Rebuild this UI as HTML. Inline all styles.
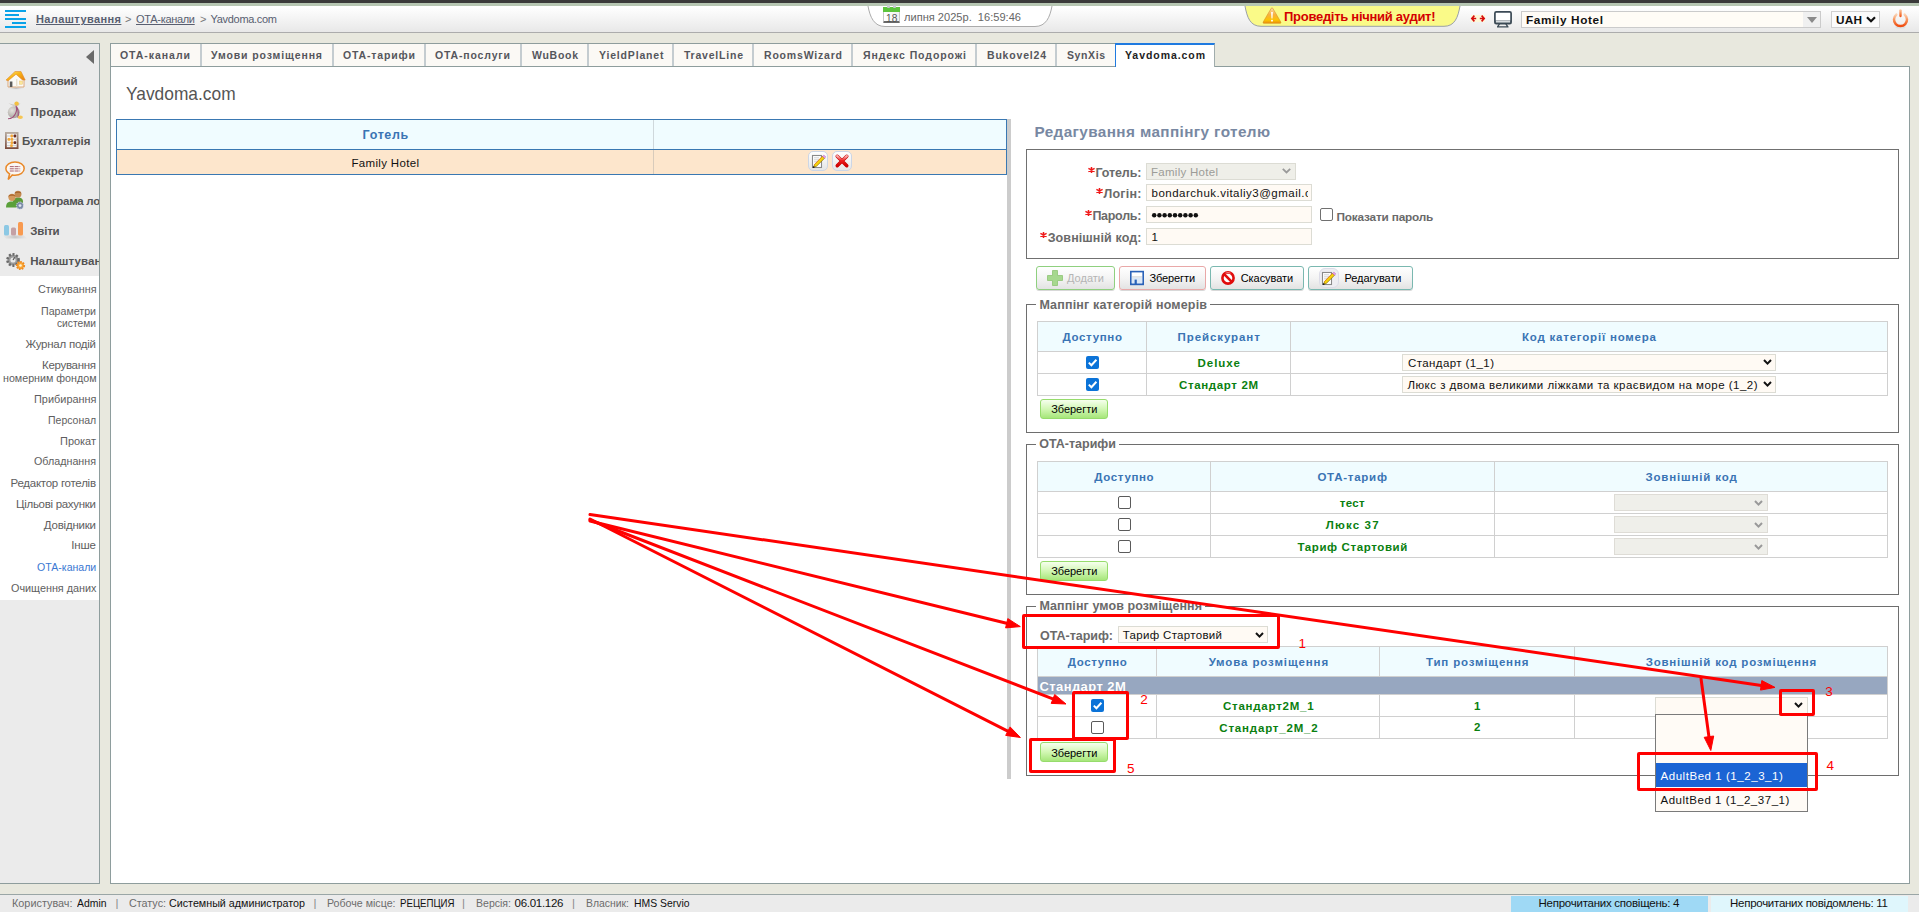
<!DOCTYPE html>
<html><head><meta charset="utf-8"><title>Yavdoma.com</title>
<style>
html,body{margin:0;padding:0;}
body{width:1919px;height:912px;overflow:hidden;position:relative;background:#e8e8de;font-family:"Liberation Sans",sans-serif;}
.t{position:absolute;white-space:nowrap;line-height:1;}
.b{position:absolute;box-sizing:border-box;}
svg{position:absolute;overflow:visible;}
</style></head><body>

<div class="b" style="left:0px;top:0px;width:1919px;height:3px;background:#3a3a3a;"></div>
<div class="b" style="left:0px;top:3px;width:1919px;height:3px;background:#b6c6b2;"></div>
<div class="b" style="left:0px;top:6px;width:1919px;height:27px;background:linear-gradient(#ffffff,#fdfdfd 10%,#e8e8e8);border-bottom:1px solid #acacac;"></div>
<div class="b" style="left:5px;top:10px;width:21px;height:2px;background:#0aa3e8;"></div>
<div class="b" style="left:5px;top:14px;width:14px;height:2px;background:#0aa3e8;"></div>
<div class="b" style="left:5px;top:18px;width:21px;height:2px;background:#0aa3e8;"></div>
<div class="b" style="left:12px;top:22px;width:14px;height:2px;background:#0aa3e8;"></div>
<div class="b" style="left:5px;top:26px;width:21px;height:2px;background:#0aa3e8;"></div>
<div class="t" style="left:36.00px;top:14.49px;font-size:11px;font-weight:bold;letter-spacing:0.404px;color:#585e70;text-decoration:underline;">Налаштування</div>
<div class="t" style="left:125.00px;top:14.49px;font-size:11px;color:#777;">&gt;</div>
<div class="t" style="left:136.00px;top:14.49px;font-size:11px;letter-spacing:-0.315px;color:#585e70;text-decoration:underline;">ОТА-канали</div>
<div class="t" style="left:200.00px;top:14.49px;font-size:11px;color:#777;">&gt;</div>
<div class="t" style="left:210.50px;top:14.49px;font-size:11px;letter-spacing:-0.299px;color:#585e70;">Yavdoma.com</div>
<svg style="left:0;top:0" width="1919" height="40"><path d="M868,6 C870,17 874,26.5 885,26.5 L1035,26.5 C1046,26.5 1050,17 1052,6 Z" fill="#ffffff" stroke="none"/><path d="M868,6 C870,17 874,26.5 885,26.5 L1035,26.5 C1046,26.5 1050,17 1052,6" fill="none" stroke="#ababab" stroke-width="1"/></svg>
<div class="b" style="left:883px;top:7px;width:17px;height:16px;background:linear-gradient(90deg,#fff,#f2f2f2);border:1px solid #c8c8c8;border-bottom:2px solid #6a6a6a;border-radius:1px;"></div>
<div class="b" style="left:883px;top:7px;width:17px;height:5px;background:#5cc43c;"></div>
<div class="b" style="left:887px;top:5px;width:3px;height:3px;background:#c8c8d0;border-radius:1px;"></div>
<div class="b" style="left:893px;top:5px;width:3px;height:3px;background:#c8c8d0;border-radius:1px;"></div>
<div class="t" style="left:885.95px;top:12.81px;font-size:10.5px;transform:scaleX(0.9675);transform-origin:0 0;color:#555;">18</div>
<div class="t" style="left:904.00px;top:11.81px;font-size:11.8px;transform:scaleX(0.9388);transform-origin:0 0;color:#666;">липня 2025р.&nbsp;&nbsp;16:59:46</div>
<svg style="left:0;top:0" width="1919" height="40"><path d="M1245,6 C1247,17 1250,26.3 1261,26.3 L1444,26.3 C1455,26.3 1458,17 1460,6 Z" fill="#fafa88" stroke="none"/><path d="M1245,6 C1247,17 1250,26.3 1261,26.3 L1444,26.3 C1455,26.3 1458,17 1460,6" fill="none" stroke="#9aa0a8" stroke-width="1"/></svg>
<svg style="left:1262px;top:7px" width="20" height="17" viewBox="0 0 20 17"><defs><linearGradient id="wg" x1="0" y1="0" x2="0" y2="1"><stop offset="0" stop-color="#fbe0b8"/><stop offset="0.45" stop-color="#f8b040"/><stop offset="0.8" stop-color="#fbc400"/><stop offset="1" stop-color="#e88a10"/></linearGradient></defs><path d="M9.3,1.2 Q10,0 10.7,1.2 L18.8,15 Q19.4,16.3 18,16.3 L2,16.3 Q0.6,16.3 1.2,15 Z" fill="url(#wg)" stroke="#d99020" stroke-width="0.6"/><path d="M9.1,5 L10.9,5 L10.5,11.6 L9.5,11.6 Z" fill="#fff"/><rect x="9.1" y="12.7" width="1.8" height="1.8" rx="0.5" fill="#fff"/></svg>
<div class="t" style="left:1284.00px;top:10.00px;font-size:13px;font-weight:bold;letter-spacing:-0.279px;color:#d40000;">Проведіть нічний аудит!</div>
<div class="b" style="left:1471px;top:15px;width:14px;height:7px;background:#fdf8d8;"></div>
<svg style="left:1471px;top:15px" width="14" height="7" viewBox="0 0 14 7"><path d="M3.4,0.6 L0.8,3.5 L3.4,6.4 M0.8,3.5 H5.2 M10.6,0.6 L13.2,3.5 L10.6,6.4 M13.2,3.5 H8.8" fill="none" stroke="#d80c0c" stroke-width="1.6"/></svg>
<svg style="left:1494px;top:11px" width="18" height="17" viewBox="0 0 18 17"><rect x="0.9" y="0.9" width="16.2" height="11.8" rx="1.4" fill="#fff" stroke="#3b4a55" stroke-width="1.7"/><rect x="0.9" y="9.6" width="16.2" height="3.2" fill="#3b4a55"/><rect x="1.9" y="10.1" width="14.2" height="1.4" fill="#e8ecee"/><path d="M5.6,12.6 L3.6,15.8 M11.8,12.6 L13.8,15.8 M3,15.8 H14.5" stroke="#3b4a55" stroke-width="1.3" fill="none"/></svg>
<div class="b" style="left:1521px;top:11px;width:300px;height:17px;background:#fffcf6;border:1px solid #cbcbcb;"></div>
<div class="b" style="left:1803px;top:12px;width:17px;height:15px;background:#f0f0f0;"></div>
<svg style="left:1807px;top:17px" width="10" height="6" viewBox="0 0 10 6"><path d="M0,0 L10,0 L5,6 Z" fill="#8a8a8a"/></svg>
<div class="t" style="left:1526.00px;top:14.81px;font-size:11.8px;font-weight:bold;letter-spacing:0.622px;color:#111;">Family Hotel</div>
<div class="b" style="left:1831px;top:11px;width:49px;height:17px;background:#fbfbfb;border:1px solid #d0d0d0;"></div>
<div class="t" style="left:1836.00px;top:14.81px;font-size:11.8px;font-weight:bold;letter-spacing:0.217px;color:#111;">UAH</div>
<svg style="left:1866px;top:16px" width="10" height="7" viewBox="0 0 10 7"><path d="M1,1.2 L5,5.2 L9,1.2" fill="none" stroke="#111" stroke-width="2.2"/></svg>
<svg style="left:1892px;top:8px" width="17" height="21" viewBox="0 0 17 21"><defs><linearGradient id="pw" x1="0" y1="0" x2="0" y2="1"><stop offset="0" stop-color="#fbd0b0"/><stop offset="0.45" stop-color="#f7945a"/><stop offset="1" stop-color="#f04c10"/></linearGradient></defs><ellipse cx="8.5" cy="19" rx="5" ry="1.5" fill="#d8dcdc" opacity="0.8"/><path d="M4.3,6.6 A6.5,6.5 0 1 0 12.7,6.6" fill="none" stroke="url(#pw)" stroke-width="2.5" stroke-linecap="round"/><rect x="7.3" y="1.2" width="2.4" height="8" rx="1.1" fill="url(#pw)"/></svg>
<div class="b" style="left:-1px;top:43px;width:101px;height:841px;background:#ebebeb;border:1px solid #8e9d9d;"></div>
<div class="b" style="left:0px;top:276px;width:99px;height:324px;background:#ffffff;"></div>
<svg style="left:86px;top:50px" width="8" height="14" viewBox="0 0 8 14"><path d="M8,0 L8,14 L0,7 Z" fill="#6a6a6a"/></svg>
<div class="t" style="left:30.50px;top:76.27px;font-size:11.5px;font-weight:bold;letter-spacing:-0.244px;color:#535353;">Базовий</div>
<div class="t" style="left:30.50px;top:106.77px;font-size:11.5px;font-weight:bold;letter-spacing:0.297px;color:#535353;">Продаж</div>
<div class="t" style="left:22.00px;top:136.27px;font-size:11.5px;font-weight:bold;color:#535353;">Бухгалтерія</div>
<div class="t" style="left:30.20px;top:166.27px;font-size:11.5px;font-weight:bold;letter-spacing:0.032px;color:#535353;">Секретар</div>
<div style="position:absolute;left:0;top:190px;width:99px;height:30px;overflow:hidden;">
<div class="t" style="left:30.20px;top:6.27px;font-size:11.5px;font-weight:bold;letter-spacing:-0.257px;color:#535353;">Програма лояльності</div>
</div>
<div class="t" style="left:30.20px;top:225.77px;font-size:11.5px;font-weight:bold;letter-spacing:-0.168px;color:#535353;">Звіти</div>
<div style="position:absolute;left:0;top:250px;width:99px;height:25px;overflow:hidden;">
<div class="t" style="left:30.20px;top:5.97px;font-size:11.5px;font-weight:bold;letter-spacing:0.071px;color:#535353;">Налаштування</div>
</div>
<svg style="left:5px;top:70px" width="21" height="20" viewBox="0 0 21 20"><defs><linearGradient id="roof" x1="0" y1="0" x2="1" y2="1"><stop offset="0" stop-color="#fff07a"/><stop offset="0.45" stop-color="#f7b416"/><stop offset="1" stop-color="#e87a10"/></linearGradient><radialGradient id="shd" cx="0.5" cy="0.5" r="0.5"><stop offset="0" stop-color="#bbb"/><stop offset="1" stop-color="#ebebeb" stop-opacity="0"/></radialGradient></defs><ellipse cx="11" cy="18.3" rx="9" ry="1.8" fill="url(#shd)"/><path d="M3,9 L3,17 L19,17 L19,9 L11,3 Z" fill="#fbfaf6" stroke="#d9a070" stroke-width="0.9"/><path d="M1,10 L10,1.5 L16,1.5 L20.2,10 L17.5,10 L11,4.2 L3.2,10.8 Z" fill="url(#roof)" stroke="#e08a30" stroke-width="0.6"/><rect x="4.8" y="11.5" width="2.6" height="5.5" fill="#5a5a5a"/><rect x="14.5" y="11" width="3" height="3.2" fill="#fbe89a" stroke="#e8c070" stroke-width="0.5"/><rect x="11" y="9" width="1.4" height="8" fill="#e8e0d0"/></svg>
<svg style="left:7px;top:101px" width="17" height="20" viewBox="0 0 17 20"><defs><radialGradient id="bag" cx="0.35" cy="0.35" r="0.7"><stop offset="0" stop-color="#e4e2de"/><stop offset="1" stop-color="#a4a09a"/></radialGradient></defs><path d="M1.5,2.2 L6,4.8 L11,4.8 L13.5,2.2 L10,3.5 L6,3.5 Z" fill="#c8c4bc"/><circle cx="6.8" cy="11.3" r="6" fill="url(#bag)"/><circle cx="9.6" cy="2.6" r="2.2" fill="#f4c040"/><path d="M8.8,4.8 C10.5,8 9.5,11 8,13.5 C7,15.5 5.5,17 3,17.5 M9.5,5.5 C12,9 11.5,13 11,17" stroke="#a0507a" stroke-width="1.1" fill="none"/><ellipse cx="13.3" cy="16.2" rx="2.6" ry="1.8" fill="#f6c654"/><path d="M1,17.8 L4,17.3" stroke="#a0507a" stroke-width="1"/></svg>
<svg style="left:5px;top:132px" width="14" height="18" viewBox="0 0 14 18"><defs><linearGradient id="abf" x1="0" y1="0" x2="0" y2="1"><stop offset="0" stop-color="#b8aca0"/><stop offset="1" stop-color="#7a4a3a"/></linearGradient></defs><rect x="0" y="0" width="13.5" height="17" fill="url(#abf)"/><rect x="1.8" y="1.8" width="9.9" height="13.4" fill="#f8f6f2"/><path d="M1.8,4 H11.7 M1.8,7.3 H11.7 M1.8,10.6 H11.7 M1.8,13.6 H11.7" stroke="#aab0c0" stroke-width="0.6"/><rect x="5.5" y="2.6" width="2.5" height="2.8" rx="0.8" fill="#f4a838"/><rect x="8.6" y="2.6" width="2.6" height="2.8" rx="0.8" fill="#6a2a20"/><rect x="2.6" y="6" width="2.6" height="2.8" rx="0.8" fill="#f4a838"/><rect x="5.6" y="6" width="2.6" height="2.8" rx="0.8" fill="#f4a838"/><rect x="5.6" y="9.2" width="2.6" height="2.8" rx="0.8" fill="#f4a838"/><rect x="8.6" y="9.2" width="2.6" height="2.8" rx="0.8" fill="#6a2a20"/><rect x="5.2" y="12.3" width="2.6" height="2.8" rx="0.8" fill="#f4a838"/></svg>
<svg style="left:5px;top:161px" width="20" height="20" viewBox="0 0 20 20"><path d="M10,1 C15.2,1 19.2,3.9 19.2,7.6 C19.2,11.3 15.2,14.2 10,14.2 C9,14.2 8.2,14.1 7.3,13.9 L3.2,18.4 L4.6,12.8 C2.3,11.6 0.9,9.7 0.9,7.6 C0.9,3.9 4.9,1 10,1 Z" fill="#fbf7f2" stroke="#e8892a" stroke-width="1.5"/><path d="M4.8,5.6 H15.2 M4.8,7.8 H15.2 M4.8,10 H15.2" stroke="#a86070" stroke-width="1" stroke-dasharray="4 0.8"/></svg>
<svg style="left:5px;top:190px" width="20" height="20" viewBox="0 0 20 20"><path d="M8,12 C8,8.5 10,7.5 13,7.5 C16,7.5 18,8.5 18,12 L18,14 L8,14 Z" fill="#5c9a3a"/><circle cx="13" cy="4.2" r="3.4" fill="#c48a50"/><path d="M9.6,3.6 C9.8,0.8 16.2,0.8 16.4,3.6 C15,2.4 11,2.4 9.6,3.6 Z" fill="#a0602a"/><path d="M1,17.5 C1,13 3,11.5 7,11.5 C11,11.5 13,13 13,17.5 Z" fill="#5aa03a"/><circle cx="7" cy="7.3" r="3.6" fill="#d49a5e"/><path d="M3.3,7 C3.3,3.2 10.7,3.2 10.7,7 C9.5,5.3 4.5,5.3 3.3,7 Z" fill="#a8642c"/><circle cx="15" cy="15.6" r="3.6" fill="#7c8ca8" stroke="#eef" stroke-width="0.8" stroke-dasharray="1.2 0.9"/><circle cx="15" cy="15.6" r="1.4" fill="#dfe6f0"/></svg>
<svg style="left:2px;top:221px" width="26" height="19" viewBox="0 0 26 19"><defs><linearGradient id="sh" x1="0" y1="0" x2="1" y2="0"><stop offset="0" stop-color="#ebebeb"/><stop offset="0.5" stop-color="#c8c8c8"/><stop offset="1" stop-color="#ebebeb"/></linearGradient></defs><path d="M0.5,14.5 L22,14.5 L25.5,17.5 L4,17.5 Z" fill="url(#sh)"/><rect x="2" y="4" width="5" height="10.5" rx="1.5" fill="#8cc8e4"/><rect x="9" y="6.5" width="5" height="8" rx="1.5" fill="#c4a0a4"/><rect x="16" y="1" width="5" height="13.5" rx="1.5" fill="#f89a50"/></svg>
<svg style="left:5px;top:252px" width="21" height="19" viewBox="0 0 21 19"><circle cx="8" cy="8" r="5.6" fill="#9a9a9a" stroke="#6a6a6a" stroke-width="2.6" stroke-dasharray="2 1.6"/><circle cx="8" cy="8" r="2.6" fill="#e8e8e8"/><path d="M8,8 L9.8,5.2" stroke="#555" stroke-width="1.2"/><circle cx="15.5" cy="13.5" r="3.6" fill="#f8a838" stroke="#f08a20" stroke-width="2" stroke-dasharray="1.6 1.1"/><circle cx="15.5" cy="13.5" r="1.3" fill="#fff4d8"/></svg>
<div class="t" style="left:37.50px;top:284.27px;font-size:11.5px;transform:scaleX(0.9403);transform-origin:0 0;color:#5e5e60;">Стикування</div>
<div class="t" style="left:41.00px;top:305.67px;font-size:11.5px;transform:scaleX(0.9250);transform-origin:0 0;color:#5e5e60;">Параметри</div>
<div class="t" style="left:57.00px;top:317.97px;font-size:11.5px;transform:scaleX(0.8907);transform-origin:0 0;color:#5e5e60;">системи</div>
<div class="t" style="left:25.50px;top:339.27px;font-size:11.5px;letter-spacing:-0.247px;color:#5e5e60;">Журнал подій</div>
<div class="t" style="left:42.00px;top:359.97px;font-size:11.5px;letter-spacing:-0.302px;color:#5e5e60;">Керування</div>
<div class="t" style="left:2.50px;top:373.07px;font-size:11.5px;transform:scaleX(0.9300);transform-origin:0 0;color:#5e5e60;">номерним фондом</div>
<div class="t" style="left:33.50px;top:394.27px;font-size:11.5px;transform:scaleX(0.9496);transform-origin:0 0;color:#5e5e60;">Прибирання</div>
<div class="t" style="left:47.80px;top:414.87px;font-size:11.5px;transform:scaleX(0.9130);transform-origin:0 0;color:#5e5e60;">Персонал</div>
<div class="t" style="left:60.00px;top:435.87px;font-size:11.5px;transform:scaleX(0.9536);transform-origin:0 0;color:#5e5e60;">Прокат</div>
<div class="t" style="left:34.00px;top:456.47px;font-size:11.5px;transform:scaleX(0.9322);transform-origin:0 0;color:#5e5e60;">Обладнання</div>
<div class="t" style="left:10.50px;top:477.97px;font-size:11.5px;letter-spacing:-0.254px;color:#5e5e60;">Редактор готелів</div>
<div class="t" style="left:16.00px;top:498.77px;font-size:11.5px;letter-spacing:-0.294px;color:#5e5e60;">Цільові рахунки</div>
<div class="t" style="left:43.80px;top:519.57px;font-size:11.5px;letter-spacing:-0.215px;color:#5e5e60;">Довідники</div>
<div class="t" style="left:71.20px;top:540.27px;font-size:11.5px;letter-spacing:-0.123px;color:#5e5e60;">Інше</div>
<div class="t" style="left:36.80px;top:561.67px;font-size:11.5px;transform:scaleX(0.9157);transform-origin:0 0;color:#3a78d2;">ОТА-канали</div>
<div class="t" style="left:10.50px;top:582.67px;font-size:11.5px;transform:scaleX(0.9412);transform-origin:0 0;color:#5e5e60;">Очищення даних</div>
<div class="b" style="left:110px;top:66px;width:1800px;height:818px;background:#fff;border:1px solid #8e9d9d;"></div>
<div class="b" style="left:110px;top:43px;width:1005px;height:24px;background:#fbf9f5;border-top:1px solid #8e9d9d;border-bottom:1px solid #8e9d9d;border-left:1px solid #8e9d9d;"></div>
<div class="b" style="left:200px;top:44px;width:2px;height:22px;background:#c4ccd0;"></div>
<div class="b" style="left:332px;top:44px;width:2px;height:22px;background:#c4ccd0;"></div>
<div class="b" style="left:424px;top:44px;width:2px;height:22px;background:#c4ccd0;"></div>
<div class="b" style="left:520px;top:44px;width:2px;height:22px;background:#c4ccd0;"></div>
<div class="b" style="left:587px;top:44px;width:2px;height:22px;background:#c4ccd0;"></div>
<div class="b" style="left:672px;top:44px;width:2px;height:22px;background:#c4ccd0;"></div>
<div class="b" style="left:752px;top:44px;width:2px;height:22px;background:#c4ccd0;"></div>
<div class="b" style="left:851px;top:44px;width:2px;height:22px;background:#c4ccd0;"></div>
<div class="b" style="left:975px;top:44px;width:2px;height:22px;background:#c4ccd0;"></div>
<div class="b" style="left:1055px;top:44px;width:2px;height:22px;background:#c4ccd0;"></div>
<div class="b" style="left:1115px;top:43px;width:100px;height:24px;background:#fff;border-top:2px solid #1f7ae0;border-left:1px solid #1f7ae0;border-right:1px solid #a0acac;"></div>
<div class="t" style="left:120.00px;top:50.41px;font-size:10.5px;font-weight:bold;letter-spacing:0.955px;color:#55565c;">ОТА-канали</div>
<div class="t" style="left:211.00px;top:50.41px;font-size:10.5px;font-weight:bold;letter-spacing:0.885px;color:#55565c;">Умови розміщення</div>
<div class="t" style="left:343.00px;top:50.41px;font-size:10.5px;font-weight:bold;letter-spacing:0.834px;color:#55565c;">ОТА-тарифи</div>
<div class="t" style="left:435.00px;top:50.41px;font-size:10.5px;font-weight:bold;letter-spacing:0.834px;color:#55565c;">ОТА-послуги</div>
<div class="t" style="left:532.00px;top:50.41px;font-size:10.5px;font-weight:bold;letter-spacing:0.723px;color:#55565c;">WuBook</div>
<div class="t" style="left:599.00px;top:50.41px;font-size:10.5px;font-weight:bold;letter-spacing:0.829px;color:#55565c;">YieldPlanet</div>
<div class="t" style="left:684.00px;top:50.41px;font-size:10.5px;font-weight:bold;letter-spacing:0.784px;color:#55565c;">TravelLine</div>
<div class="t" style="left:764.00px;top:50.41px;font-size:10.5px;font-weight:bold;letter-spacing:0.809px;color:#55565c;">RoomsWizard</div>
<div class="t" style="left:863.00px;top:50.41px;font-size:10.5px;font-weight:bold;letter-spacing:0.913px;color:#55565c;">Яндекс Подорожі</div>
<div class="t" style="left:987.00px;top:50.41px;font-size:10.5px;font-weight:bold;letter-spacing:0.809px;color:#55565c;">Bukovel24</div>
<div class="t" style="left:1067.00px;top:50.41px;font-size:10.5px;font-weight:bold;letter-spacing:0.596px;color:#55565c;">SynXis</div>
<div class="t" style="left:1125.00px;top:50.41px;font-size:10.5px;font-weight:bold;letter-spacing:0.939px;color:#222;">Yavdoma.com</div>
<div class="t" style="left:126.00px;top:85.34px;font-size:18.5px;transform:scaleX(0.9378);transform-origin:0 0;color:#555;">Yavdoma.com</div>
<div class="b" style="left:116px;top:119px;width:891px;height:56px;background:#fde6cc;border:1px solid #3a78b2;"></div>
<div class="b" style="left:117px;top:120px;width:889px;height:29px;background:#f0fcff;"></div>
<div class="b" style="left:116px;top:149px;width:891px;height:1px;background:#3a78b2;"></div>
<div class="b" style="left:653px;top:120px;width:1px;height:29px;background:#cfd8dc;"></div>
<div class="b" style="left:653px;top:150px;width:1px;height:24px;background:#d8cbbb;"></div>
<div class="t" style="left:362.60px;top:129.42px;font-size:12.5px;font-weight:bold;letter-spacing:0.623px;color:#3a74b4;">Готель</div>
<div class="t" style="left:351.45px;top:157.97px;font-size:11.5px;letter-spacing:0.327px;color:#111;">Family Hotel</div>
<div class="b" style="left:808px;top:151px;width:20px;height:20px;border-radius:5px;background:linear-gradient(#ffffff,#e6e6e6);border:1px solid #ccd6e6;"></div>
<svg style="left:811px;top:153.5px" width="16" height="15" viewBox="0 0 16 15"><rect x="1.5" y="1.5" width="9" height="12" fill="#fff" stroke="#8a8a8a" stroke-width="1.1"/><path d="M3,3.8 H8 M3,5.8 H8 M3,7.8 H6" stroke="#c8c8c8" stroke-width="0.8"/><path d="M2.6,13.2 L3.4,10.6 L11.6,2.2 L13.6,4.2 L5.4,12.4 Z" fill="#f5d20c" stroke="#6a4a08" stroke-width="0.55"/><path d="M3.4,10.6 L11.6,2.2" stroke="#f08a20" stroke-width="0.9"/><path d="M11.6,2.2 L12.8,1 L14.8,3 L13.6,4.2 Z" fill="#f0a0f0" stroke="#a050a0" stroke-width="0.4"/><circle cx="2.6" cy="13.2" r="0.9" fill="#222"/></svg>
<div class="b" style="left:832px;top:151px;width:20px;height:20px;border-radius:5px;background:linear-gradient(#ffffff,#e6e6e6);border:1px solid #ccd6e6;"></div>
<svg style="left:835px;top:154px" width="14" height="14" viewBox="0 0 14 14"><defs><linearGradient id="xg" x1="0" y1="0" x2="0" y2="1"><stop offset="0" stop-color="#f8b0b0"/><stop offset="0.45" stop-color="#f02020"/><stop offset="1" stop-color="#d00000"/></linearGradient></defs><path d="M2.2,2.2 L11.8,11.8 M11.8,2.2 L2.2,11.8" stroke="#c80000" stroke-width="3.4" stroke-linecap="round"/><path d="M2.2,2.2 L11.8,11.8 M11.8,2.2 L2.2,11.8" stroke="url(#xg)" stroke-width="2.4" stroke-linecap="round"/></svg>
<div class="b" style="left:1007px;top:119px;width:4px;height:660px;background:#cccccc;"></div>
<div class="t" style="left:1034.50px;top:123.95px;font-size:15.3px;font-weight:bold;letter-spacing:0.386px;color:#7888a2;">Редагування маппінгу готелю</div>
<div class="b" style="left:1026px;top:149px;width:873px;height:110px;border:1px solid #707070;background:#fff;"></div>
<div class="t" style="left:1095.40px;top:167.22px;font-size:12.5px;font-weight:bold;letter-spacing:-0.108px;color:#6a6a6a;">Готель:</div>
<div class="t" style="left:1103.40px;top:188.32px;font-size:12.5px;font-weight:bold;letter-spacing:0.240px;color:#6a6a6a;">Логін:</div>
<div class="t" style="left:1092.40px;top:210.22px;font-size:12.5px;font-weight:bold;letter-spacing:-0.281px;color:#6a6a6a;">Пароль:</div>
<div class="t" style="left:1047.70px;top:232.22px;font-size:12.5px;font-weight:bold;letter-spacing:0.098px;color:#6a6a6a;">Зовнішній код:</div>
<svg style="left:1088.2px;top:167px" width="7" height="6" viewBox="0 0 7 6"><path d="M3.5,0 V6 M0.4,1.4 L6.6,4.6 M0.4,4.6 L6.6,1.4" stroke="#f01818" stroke-width="1.5"/></svg>
<svg style="left:1096.4px;top:188px" width="7" height="6" viewBox="0 0 7 6"><path d="M3.5,0 V6 M0.4,1.4 L6.6,4.6 M0.4,4.6 L6.6,1.4" stroke="#f01818" stroke-width="1.5"/></svg>
<svg style="left:1084.8px;top:210px" width="7" height="6" viewBox="0 0 7 6"><path d="M3.5,0 V6 M0.4,1.4 L6.6,4.6 M0.4,4.6 L6.6,1.4" stroke="#f01818" stroke-width="1.5"/></svg>
<svg style="left:1040.4px;top:232px" width="7" height="6" viewBox="0 0 7 6"><path d="M3.5,0 V6 M0.4,1.4 L6.6,4.6 M0.4,4.6 L6.6,1.4" stroke="#f01818" stroke-width="1.5"/></svg>
<div class="b" style="left:1146px;top:163px;width:150px;height:17px;background:#efefe9;border:1px solid #dcdcd4;"></div>
<div class="t" style="left:1151.00px;top:166.97px;font-size:11.5px;letter-spacing:0.282px;color:#9c9c98;">Family Hotel</div>
<svg style="left:1282px;top:168px" width="9" height="6" viewBox="0 0 9 6"><path d="M0.8,0.8 L4.5,4.5 L8.2,0.8" fill="none" stroke="#9a9a9a" stroke-width="1.8"/></svg>
<div class="b" style="left:1146px;top:184px;width:166px;height:17px;background:#fffaf4;border:1px solid #dcdcd4;"></div>
<div style="position:absolute;left:1147px;top:185px;width:161px;height:15px;overflow:hidden;">
<div class="t" style="left:4.60px;top:3.27px;font-size:11.5px;letter-spacing:0.481px;color:#111;">bondarchuk.vitaliy3@gmail.com</div>
</div>
<div class="b" style="left:1146px;top:206px;width:166px;height:17px;background:#fffaf4;border:1px solid #dcdcd4;"></div>
<svg style="left:1151px;top:211.5px" width="50" height="7"><circle cx="3.20" cy="3.3" r="2.25" fill="#111"/><circle cx="8.40" cy="3.3" r="2.25" fill="#111"/><circle cx="13.60" cy="3.3" r="2.25" fill="#111"/><circle cx="18.80" cy="3.3" r="2.25" fill="#111"/><circle cx="24.00" cy="3.3" r="2.25" fill="#111"/><circle cx="29.20" cy="3.3" r="2.25" fill="#111"/><circle cx="34.40" cy="3.3" r="2.25" fill="#111"/><circle cx="39.60" cy="3.3" r="2.25" fill="#111"/><circle cx="44.80" cy="3.3" r="2.25" fill="#111"/></svg>
<div class="b" style="left:1146px;top:228px;width:166px;height:17px;background:#fffaf4;border:1px solid #dcdcd4;"></div>
<div class="t" style="left:1151.50px;top:232.17px;font-size:11.5px;color:#111;">1</div>
<div class="b" style="left:1320px;top:208px;width:13px;height:13px;background:#fff;border:1px solid #707070;border-radius:2px;"></div>
<div class="t" style="left:1336.40px;top:211.81px;font-size:11.8px;font-weight:bold;letter-spacing:-0.175px;color:#6a6a6a;">Показати пароль</div>
<div class="b" style="left:1036px;top:266px;width:79px;height:24px;background:linear-gradient(#ffffff,#f4f4f4 50%,#e3e3e3);border:1px solid #8fd07f;border-radius:3px;box-shadow:0 1px 0 #d8d8d8;"></div>
<div class="t" style="left:1067.00px;top:273.49px;font-size:11px;letter-spacing:0.014px;color:#b4b4b4;">Додати</div>
<svg style="left:1047px;top:270px" width="16" height="16" viewBox="0 0 16 16"><path d="M5.5,0.5 H10.5 V5.5 H15.5 V10.5 H10.5 V15.5 H5.5 V10.5 H0.5 V5.5 H5.5 Z" fill="#a6d88e" stroke="#8ec474" stroke-width="0.8"/></svg>
<div class="b" style="left:1119px;top:266px;width:87px;height:24px;background:linear-gradient(#ffffff,#f4f4f4 50%,#e3e3e3);border:1px solid #e9a8a8;border-radius:3px;box-shadow:0 1px 0 #d8d8d8;"></div>
<div class="t" style="left:1149.50px;top:273.49px;font-size:11px;letter-spacing:-0.110px;color:#000;">Зберегти</div>
<svg style="left:1130px;top:271px" width="14" height="14" viewBox="0 0 14 14"><rect x="0.8" y="0.6" width="12.4" height="12.8" fill="#fff" stroke="#2a62b8" stroke-width="1.6"/><rect x="2" y="5.6" width="10" height="0.8" fill="#b8b8b8"/><rect x="2" y="6.4" width="10" height="6.2" fill="#dce8f6"/><rect x="4.6" y="8.6" width="2.2" height="4.4" fill="#2a62b8"/><rect x="0" y="12.6" width="14" height="1.4" fill="#2a62b8"/></svg>
<div class="b" style="left:1210px;top:266px;width:94px;height:24px;background:linear-gradient(#ffffff,#f4f4f4 50%,#e3e3e3);border:1px solid #7ab8b0;border-radius:3px;box-shadow:0 1px 0 #d8d8d8;"></div>
<div class="t" style="left:1240.70px;top:273.49px;font-size:11px;letter-spacing:-0.049px;color:#000;">Скасувати</div>
<svg style="left:1221px;top:271px" width="14" height="14" viewBox="0 0 14 14"><circle cx="7" cy="7" r="5.6" fill="#fff" stroke="#e00c0c" stroke-width="2.6"/><path d="M3.2,3.2 L10.8,10.8" stroke="#e00c0c" stroke-width="2.6"/><path d="M4.5,2.2 A5.6,5.6 0 0 1 9.5,2.2" stroke="#f8a0a0" stroke-width="0.9" fill="none"/></svg>
<div class="b" style="left:1308px;top:266px;width:105px;height:24px;background:linear-gradient(#ffffff,#f4f4f4 50%,#e3e3e3);border:1px solid #7ab8b0;border-radius:3px;box-shadow:0 1px 0 #d8d8d8;"></div>
<div class="t" style="left:1344.50px;top:273.49px;font-size:11px;letter-spacing:-0.062px;color:#000;">Редагувати</div>
<div class="b" style="left:1319px;top:268px;width:20px;height:20px;border-radius:6px;background:#eeeef2;border:1px solid #dcdce8;"></div>
<svg style="left:1321px;top:270.5px" width="16" height="15" viewBox="0 0 16 15"><rect x="1.5" y="1.5" width="9" height="12" fill="#fff" stroke="#8a8a8a" stroke-width="1.1"/><path d="M3,3.8 H8 M3,5.8 H8 M3,7.8 H6" stroke="#c8c8c8" stroke-width="0.8"/><path d="M2.6,13.2 L3.4,10.6 L11.6,2.2 L13.6,4.2 L5.4,12.4 Z" fill="#f5d20c" stroke="#6a4a08" stroke-width="0.55"/><path d="M3.4,10.6 L11.6,2.2" stroke="#f08a20" stroke-width="0.9"/><path d="M11.6,2.2 L12.8,1 L14.8,3 L13.6,4.2 Z" fill="#f0a0f0" stroke="#a050a0" stroke-width="0.4"/><circle cx="2.6" cy="13.2" r="0.9" fill="#222"/></svg>
<div class="b" style="left:1026px;top:304px;width:873px;height:129px;border:1px solid #6e6e6e;"></div>
<div class="b" style="left:1036px;top:302px;width:174px;height:5px;background:#fff;"></div>
<div class="t" style="left:1039.40px;top:298.92px;font-size:12.5px;font-weight:bold;letter-spacing:0.169px;color:#6a6a6a;">Маппінг категорій номерів</div>
<div class="b" style="left:1037px;top:321px;width:851px;height:75px;background:#fff;border:1px solid #d0d0d0;"></div>
<div class="b" style="left:1038px;top:322px;width:849px;height:29px;background:#f0fcff;"></div>
<div class="b" style="left:1037px;top:351px;width:851px;height:1px;background:#d0d0d0;"></div>
<div class="b" style="left:1037px;top:373px;width:851px;height:1px;background:#d0d0d0;"></div>
<div class="b" style="left:1146px;top:321px;width:1px;height:74px;background:#d0d0d0;"></div>
<div class="b" style="left:1290px;top:321px;width:1px;height:74px;background:#d0d0d0;"></div>
<div class="t" style="left:1062.40px;top:332.37px;font-size:11.5px;font-weight:bold;letter-spacing:0.681px;color:#3a74b4;">Доступно</div>
<div class="t" style="left:1177.60px;top:332.37px;font-size:11.5px;font-weight:bold;letter-spacing:0.905px;color:#3a74b4;">Прейскурант</div>
<div class="t" style="left:1522.00px;top:332.37px;font-size:11.5px;font-weight:bold;letter-spacing:0.788px;color:#3a74b4;">Код категорії номера</div>
<div class="b" style="left:1086px;top:356px;width:13px;height:13px;border-radius:2px;background:#0b73d8;"></div>
<svg style="left:1086px;top:356px" width="13" height="13" viewBox="0 0 13 13"><path d="M2.8,6.6 L5.4,9.2 L10.4,3.8" fill="none" stroke="#fff" stroke-width="2"/></svg>
<div class="b" style="left:1086px;top:378px;width:13px;height:13px;border-radius:2px;background:#0b73d8;"></div>
<svg style="left:1086px;top:378px" width="13" height="13" viewBox="0 0 13 13"><path d="M2.8,6.6 L5.4,9.2 L10.4,3.8" fill="none" stroke="#fff" stroke-width="2"/></svg>
<div class="t" style="left:1197.60px;top:357.87px;font-size:11.5px;font-weight:bold;letter-spacing:0.937px;color:#0a8010;">Deluxe</div>
<div class="t" style="left:1179.00px;top:379.77px;font-size:11.5px;font-weight:bold;letter-spacing:0.635px;color:#0a8010;">Стандарт 2М</div>
<div class="b" style="left:1402px;top:354px;width:374px;height:17px;background:#fffaf4;border:1px solid #dcdcd4;"></div>
<div class="t" style="left:1408.00px;top:357.97px;font-size:11.5px;letter-spacing:0.404px;color:#111;">Стандарт (1_1)</div>
<svg style="left:1762.5px;top:358.5px" width="9" height="6" viewBox="0 0 9 6"><path d="M1,1 L4.5,4.6 L8,1" fill="none" stroke="#111" stroke-width="2.0"/></svg>
<div class="b" style="left:1402px;top:376px;width:374px;height:17px;background:#fffaf4;border:1px solid #dcdcd4;"></div>
<div class="t" style="left:1407.50px;top:379.97px;font-size:11.5px;letter-spacing:0.476px;color:#111;">Люкс з двома великими ліжками та краєвидом на море (1_2)</div>
<svg style="left:1762.5px;top:380.5px" width="9" height="6" viewBox="0 0 9 6"><path d="M1,1 L4.5,4.6 L8,1" fill="none" stroke="#111" stroke-width="2.0"/></svg>
<div class="b" style="left:1040px;top:399px;width:68px;height:20px;background:linear-gradient(#f6ffee,#d2f7b4 50%,#a6e67a);border:1px solid #96dc6c;border-radius:3px;"></div>
<div class="t" style="left:1051.20px;top:404.19px;font-size:11px;letter-spacing:-0.038px;color:#000;">Зберегти</div>
<div class="b" style="left:1026px;top:444px;width:873px;height:151px;border:1px solid #6e6e6e;"></div>
<div class="b" style="left:1036px;top:442px;width:83px;height:5px;background:#fff;"></div>
<div class="t" style="left:1039.20px;top:438.32px;font-size:12.5px;font-weight:bold;color:#6a6a6a;">ОТА-тарифи</div>
<div class="b" style="left:1037px;top:461px;width:851px;height:97px;background:#fff;border:1px solid #d0d0d0;"></div>
<div class="b" style="left:1038px;top:462px;width:849px;height:29px;background:#f0fcff;"></div>
<div class="b" style="left:1037px;top:491px;width:851px;height:1px;background:#d0d0d0;"></div>
<div class="b" style="left:1037px;top:513px;width:851px;height:1px;background:#d0d0d0;"></div>
<div class="b" style="left:1037px;top:535px;width:851px;height:1px;background:#d0d0d0;"></div>
<div class="b" style="left:1210px;top:461px;width:1px;height:96px;background:#d0d0d0;"></div>
<div class="b" style="left:1494px;top:461px;width:1px;height:96px;background:#d0d0d0;"></div>
<div class="t" style="left:1094.35px;top:472.07px;font-size:11.5px;font-weight:bold;letter-spacing:0.638px;color:#3a74b4;">Доступно</div>
<div class="t" style="left:1317.45px;top:472.07px;font-size:11.5px;font-weight:bold;letter-spacing:0.742px;color:#3a74b4;">ОТА-тариф</div>
<div class="t" style="left:1645.40px;top:472.07px;font-size:11.5px;font-weight:bold;letter-spacing:0.849px;color:#3a74b4;">Зовнішній код</div>
<div class="b" style="left:1118px;top:496px;width:13px;height:13px;border-radius:2px;background:#fff;border:1px solid #5a5a5a;"></div>
<div class="b" style="left:1118px;top:518px;width:13px;height:13px;border-radius:2px;background:#fff;border:1px solid #5a5a5a;"></div>
<div class="b" style="left:1118px;top:540px;width:13px;height:13px;border-radius:2px;background:#fff;border:1px solid #5a5a5a;"></div>
<div class="t" style="left:1339.70px;top:497.77px;font-size:11.5px;font-weight:bold;letter-spacing:0.365px;color:#0a8010;">тест</div>
<div class="t" style="left:1325.85px;top:519.77px;font-size:11.5px;font-weight:bold;letter-spacing:1.137px;color:#0a8010;">Люкс 37</div>
<div class="t" style="left:1297.50px;top:541.77px;font-size:11.5px;font-weight:bold;letter-spacing:0.599px;color:#0a8010;">Тариф Стартовий</div>
<div class="b" style="left:1614px;top:494px;width:154px;height:17px;background:#efefea;border:1px solid #dedcd6;"></div>
<svg style="left:1754px;top:500px" width="9" height="6" viewBox="0 0 9 6"><path d="M1,1 L4.5,4.6 L8,1" fill="none" stroke="#999" stroke-width="2.0"/></svg>
<div class="b" style="left:1614px;top:516px;width:154px;height:17px;background:#efefea;border:1px solid #dedcd6;"></div>
<svg style="left:1754px;top:522px" width="9" height="6" viewBox="0 0 9 6"><path d="M1,1 L4.5,4.6 L8,1" fill="none" stroke="#999" stroke-width="2.0"/></svg>
<div class="b" style="left:1614px;top:538px;width:154px;height:17px;background:#efefea;border:1px solid #dedcd6;"></div>
<svg style="left:1754px;top:544px" width="9" height="6" viewBox="0 0 9 6"><path d="M1,1 L4.5,4.6 L8,1" fill="none" stroke="#999" stroke-width="2.0"/></svg>
<div class="b" style="left:1040px;top:561px;width:68px;height:20px;background:linear-gradient(#f6ffee,#d2f7b4 50%,#a6e67a);border:1px solid #96dc6c;border-radius:3px;"></div>
<div class="t" style="left:1051.20px;top:566.19px;font-size:11px;letter-spacing:-0.038px;color:#000;">Зберегти</div>
<div class="b" style="left:1026px;top:606px;width:873px;height:170px;border:1px solid #6e6e6e;"></div>
<div class="b" style="left:1036px;top:604px;width:169px;height:5px;background:#fff;"></div>
<div class="t" style="left:1039.40px;top:599.82px;font-size:12.5px;font-weight:bold;letter-spacing:0.091px;color:#6a6a6a;">Маппінг умов розміщення</div>
<div class="t" style="left:1040.00px;top:630.12px;font-size:12.5px;font-weight:bold;letter-spacing:-0.029px;color:#6a6a6a;">ОТА-тариф:</div>
<div class="b" style="left:1118px;top:626px;width:150px;height:17px;background:#fffaf4;border:1px solid #dcdcd4;"></div>
<div class="t" style="left:1122.80px;top:630.27px;font-size:11.5px;letter-spacing:0.310px;color:#111;">Тариф Стартовий</div>
<svg style="left:1254.5px;top:632px" width="9" height="6" viewBox="0 0 9 6"><path d="M1,1 L4.5,4.6 L8,1" fill="none" stroke="#111" stroke-width="2.0"/></svg>
<div class="b" style="left:1037px;top:646px;width:851px;height:93px;background:#fff;border:1px solid #d0d0d0;"></div>
<div class="b" style="left:1038px;top:647px;width:849px;height:29px;background:#f0fcff;"></div>
<div class="b" style="left:1037px;top:676px;width:851px;height:1px;background:#d0d0d0;"></div>
<div class="b" style="left:1037px;top:694px;width:851px;height:1px;background:#d0d0d0;"></div>
<div class="b" style="left:1037px;top:716px;width:851px;height:1px;background:#d0d0d0;"></div>
<div class="b" style="left:1038px;top:677px;width:849px;height:17px;background:#97a7c0;"></div>
<div class="b" style="left:1156px;top:647px;width:1px;height:29px;background:#d0d0d0;"></div>
<div class="b" style="left:1156px;top:695px;width:1px;height:43px;background:#d0d0d0;"></div>
<div class="b" style="left:1379px;top:647px;width:1px;height:29px;background:#d0d0d0;"></div>
<div class="b" style="left:1379px;top:695px;width:1px;height:43px;background:#d0d0d0;"></div>
<div class="b" style="left:1574px;top:647px;width:1px;height:29px;background:#d0d0d0;"></div>
<div class="b" style="left:1574px;top:695px;width:1px;height:43px;background:#d0d0d0;"></div>
<div class="t" style="left:1067.70px;top:657.07px;font-size:11.5px;font-weight:bold;letter-spacing:0.624px;color:#3a74b4;">Доступно</div>
<div class="t" style="left:1208.65px;top:657.07px;font-size:11.5px;font-weight:bold;letter-spacing:0.886px;color:#3a74b4;">Умова розміщення</div>
<div class="t" style="left:1426.00px;top:657.07px;font-size:11.5px;font-weight:bold;letter-spacing:0.836px;color:#3a74b4;">Тип розміщення</div>
<div class="t" style="left:1645.65px;top:657.07px;font-size:11.5px;font-weight:bold;letter-spacing:0.807px;color:#3a74b4;">Зовнішній код розміщення</div>
<div class="t" style="left:1039.40px;top:679.50px;font-size:13px;font-weight:bold;letter-spacing:0.427px;color:#ffffff;text-shadow:0 0 1px #8898b0;">Стандарт 2М</div>
<div class="b" style="left:1091px;top:699px;width:13px;height:13px;border-radius:2px;background:#0b73d8;"></div>
<svg style="left:1091px;top:699px" width="13" height="13" viewBox="0 0 13 13"><path d="M2.8,6.6 L5.4,9.2 L10.4,3.8" fill="none" stroke="#fff" stroke-width="2"/></svg>
<div class="b" style="left:1091px;top:721px;width:13px;height:13px;border-radius:2px;background:#fff;border:1px solid #5a5a5a;"></div>
<div class="t" style="left:1223.00px;top:700.67px;font-size:11.5px;font-weight:bold;letter-spacing:0.759px;color:#0a8010;">Стандарт2М_1</div>
<div class="t" style="left:1219.30px;top:722.57px;font-size:11.5px;font-weight:bold;letter-spacing:0.813px;color:#0a8010;">Стандарт_2М_2</div>
<div class="t" style="left:1474.10px;top:700.57px;font-size:11.5px;font-weight:bold;color:#0a8010;">1</div>
<div class="t" style="left:1474.10px;top:722.47px;font-size:11.5px;font-weight:bold;color:#0a8010;">2</div>
<div class="b" style="left:1655px;top:697px;width:153px;height:18px;background:#fffaf4;border:1px solid #dcdcd4;"></div>
<svg style="left:1794px;top:702px" width="9" height="6" viewBox="0 0 9 6"><path d="M1,1 L4.5,4.6 L8,1" fill="none" stroke="#111" stroke-width="2.0"/></svg>
<div class="b" style="left:1040px;top:742px;width:68px;height:20px;background:linear-gradient(#f6ffee,#d2f7b4 50%,#a6e67a);border:1px solid #96dc6c;border-radius:3px;"></div>
<div class="t" style="left:1051.20px;top:747.69px;font-size:11px;letter-spacing:-0.038px;color:#000;">Зберегти</div>
<div class="b" style="left:1655px;top:714px;width:153px;height:98px;background:#fffbf6;border:1px solid #7a7a7a;"></div>
<div class="b" style="left:1656px;top:763px;width:151px;height:24px;background:#1b64d4;"></div>
<div class="t" style="left:1660.50px;top:770.97px;font-size:11.5px;letter-spacing:0.548px;color:#fff;">AdultBed 1 (1_2_3_1)</div>
<div class="t" style="left:1660.50px;top:795.07px;font-size:11.5px;letter-spacing:0.526px;color:#111;">AdultBed 1 (1_2_37_1)</div>
<div class="b" style="left:0px;top:894px;width:1919px;height:18px;background:#ebebeb;border-top:1px solid #9aa6a6;"></div>
<div class="t" style="left:11.50px;top:898.27px;font-size:11.5px;transform:scaleX(0.9435);transform-origin:0 0;color:#6c6c6c;">Користувач:</div>
<div class="t" style="left:76.90px;top:898.27px;font-size:11.5px;transform:scaleX(0.9050);transform-origin:0 0;color:#111;">Admin</div>
<div class="t" style="left:115.50px;top:898.27px;font-size:11.5px;color:#888;">|</div>
<div class="t" style="left:129.00px;top:898.27px;font-size:11.5px;transform:scaleX(0.9355);transform-origin:0 0;color:#6c6c6c;">Статус:</div>
<div class="t" style="left:169.00px;top:898.27px;font-size:11.5px;transform:scaleX(0.9324);transform-origin:0 0;color:#111;">Системный администратор</div>
<div class="t" style="left:313.50px;top:898.27px;font-size:11.5px;color:#888;">|</div>
<div class="t" style="left:327.00px;top:898.27px;font-size:11.5px;transform:scaleX(0.9240);transform-origin:0 0;color:#6c6c6c;">Робоче місце:</div>
<div class="t" style="left:400.00px;top:898.27px;font-size:11.5px;transform:scaleX(0.8402);transform-origin:0 0;color:#111;">РЕЦЕПЦИЯ</div>
<div class="t" style="left:462.00px;top:898.27px;font-size:11.5px;color:#888;">|</div>
<div class="t" style="left:476.00px;top:898.27px;font-size:11.5px;transform:scaleX(0.9165);transform-origin:0 0;color:#6c6c6c;">Версія:</div>
<div class="t" style="left:514.50px;top:898.27px;font-size:11.5px;letter-spacing:-0.270px;color:#111;">06.01.126</div>
<div class="t" style="left:572.00px;top:898.27px;font-size:11.5px;color:#888;">|</div>
<div class="t" style="left:585.50px;top:898.27px;font-size:11.5px;transform:scaleX(0.9047);transform-origin:0 0;color:#6c6c6c;">Власник:</div>
<div class="t" style="left:633.50px;top:898.27px;font-size:11.5px;transform:scaleX(0.9047);transform-origin:0 0;color:#111;">HMS Servio</div>
<div class="b" style="left:1511px;top:896px;width:197px;height:16px;background:#9fd9f5;"></div>
<div class="b" style="left:1711px;top:896px;width:197px;height:16px;background:#dff6fc;"></div>
<div class="t" style="left:1538.50px;top:898.27px;font-size:11.5px;letter-spacing:-0.251px;color:#111;">Непрочитаних сповіщень: 4</div>
<div class="t" style="left:1730.00px;top:898.27px;font-size:11.5px;letter-spacing:-0.267px;color:#111;">Непрочитаних повідомлень: 11</div>
<div class="b" style="left:1022px;top:614px;width:258px;height:35px;border:3px solid #ff0000;border-radius:2px;"></div>
<div class="b" style="left:1072px;top:691px;width:57px;height:49px;border:3px solid #ff0000;border-radius:2px;"></div>
<div class="b" style="left:1779px;top:689px;width:36px;height:27px;border:3px solid #ff0000;border-radius:2px;"></div>
<div class="b" style="left:1637px;top:752px;width:181px;height:39px;border:3px solid #ff0000;border-radius:2px;"></div>
<div class="b" style="left:1029px;top:738px;width:87px;height:35px;border:3px solid #ff0000;border-radius:2px;"></div>
<div class="t" style="left:1298.50px;top:637.17px;font-size:13.5px;color:#ff0000;font-weight:normal;">1</div>
<div class="t" style="left:1140.30px;top:693.07px;font-size:13.5px;color:#ff0000;font-weight:normal;">2</div>
<div class="t" style="left:1825.30px;top:685.27px;font-size:13.5px;color:#ff0000;font-weight:normal;">3</div>
<div class="t" style="left:1826.50px;top:758.87px;font-size:13.5px;color:#ff0000;font-weight:normal;">4</div>
<div class="t" style="left:1127.00px;top:761.57px;font-size:13.5px;color:#ff0000;font-weight:normal;">5</div>
<svg style="left:0;top:0" width="1919" height="912"><line x1="590" y1="514.5" x2="1763.1" y2="685.7" stroke="#ff0000" stroke-width="3" stroke-linecap="round"/><polygon points="1775.0,687.4 1760.5,690.1 1761.8,680.6" fill="#ff0000" stroke="#ff0000" stroke-width="1" stroke-linejoin="round"/><line x1="590" y1="521" x2="1008.6" y2="623.7" stroke="#ff0000" stroke-width="3" stroke-linecap="round"/><polygon points="1020.3,626.6 1005.6,627.9 1007.8,618.6" fill="#ff0000" stroke="#ff0000" stroke-width="1" stroke-linejoin="round"/><line x1="590" y1="520" x2="1054.8" y2="699.7" stroke="#ff0000" stroke-width="3" stroke-linecap="round"/><polygon points="1066.0,704.0 1051.2,703.4 1054.7,694.5" fill="#ff0000" stroke="#ff0000" stroke-width="1" stroke-linejoin="round"/><line x1="590" y1="519" x2="1009.7" y2="732.1" stroke="#ff0000" stroke-width="3" stroke-linecap="round"/><polygon points="1020.4,737.5 1005.7,735.4 1010.1,726.9" fill="#ff0000" stroke="#ff0000" stroke-width="1" stroke-linejoin="round"/><line x1="1701" y1="678.5" x2="1709.2" y2="738.6" stroke="#ff0000" stroke-width="3" stroke-linecap="round"/><polygon points="1710.8,750.5 1704.2,737.3 1713.7,736.0" fill="#ff0000" stroke="#ff0000" stroke-width="1" stroke-linejoin="round"/></svg>
</body></html>
